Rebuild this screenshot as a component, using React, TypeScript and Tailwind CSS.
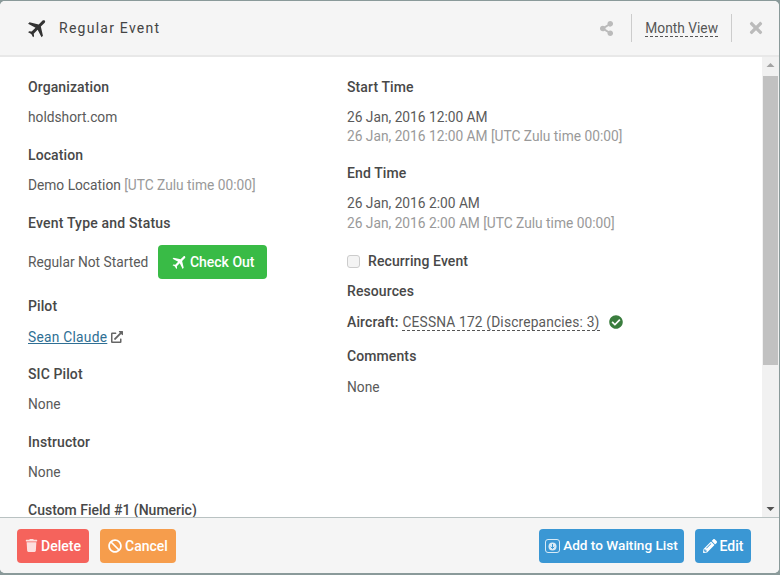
import React from 'react';
import { MdFlight } from 'react-icons/md';
import { FaShareAlt, FaTimes, FaTrash, FaBan, FaPencilAlt, FaExternalLinkAlt, FaCheckCircle } from 'react-icons/fa';

const Field: React.FC<{ label: string; className?: string; valueClass?: string; labelClass?: string; children?: React.ReactNode }> = ({ label, className, valueClass, labelClass, children }) => (
  <div className={className}>
    <div className={`font-medium text-[#484848] leading-5 ${labelClass || 'tracking-[0.1px]'}`}>{label}</div>
    {children && <div className={`leading-5 text-[#5a5a5a] text-[13.75px] ${valueClass || 'mt-[10px]'}`}>{children}</div>}
  </div>
);

const Muted: React.FC<{ children: React.ReactNode }> = ({ children }) => <span className="text-[#999]">{children}</span>;

const App: React.FC = () => {
  return (
    <div className="w-[780px] h-[575px] bg-[#8a9a9a] overflow-hidden font-['Roboto',sans-serif] text-sm pt-px pb-[2px]">
      <div className="h-[572px] w-[779px] bg-white rounded-[5px] flex flex-col overflow-hidden">
        {/* header */}
        <div className="h-[56px] shrink-0 bg-[#f5f5f5] border-b-2 border-[#e8e8e8] flex items-center pl-[26px] pr-[14px]">
          <MdFlight className="text-[#333] rotate-45" size={24} />
          <span className="ml-[9px] text-[#444] tracking-[1.25px]">Regular Event</span>
          <div className="ml-auto flex items-center">
            <FaShareAlt className="text-[#bbb]" size={15} />
            <div className="w-px h-[28px] bg-[#ccc] ml-[17px]" />
            <span className="mx-[13px] text-[#555] text-[13.75px] border-b border-dashed border-[#555] leading-[16px]">Month View</span>
            <div className="w-px h-[28px] bg-[#ccc]" />
            <FaTimes className="text-[#bbb] ml-[15px]" size={18} />
          </div>
        </div>

        {/* body */}
        <div className="flex-1 min-h-0 flex">
          <div className="flex-1 min-w-0 overflow-hidden flex pt-[20px]">
            <div className="w-[347px] pl-[28px] shrink-0">
              <Field label="Organization">holdshort.com</Field>
              <Field label="Location" className="mt-[18px]">Demo Location <Muted>[UTC Zulu time 00:00]</Muted></Field>
              <Field label="Event Type and Status" className="mt-[18px]" labelClass="tracking-[0.2px]" valueClass="mt-[12px]">
                <div className="flex items-center">
                  <span className="pb-px">Regular Not Started</span>
                  <button className="ml-[10px] h-[34px] w-[109px] rounded-[4px] bg-[#39bb46] text-white font-medium text-sm flex items-center justify-center gap-[1px]">
                    <MdFlight className="rotate-45" size={18} /> Check Out
                  </button>
                </div>
              </Field>
              <Field label="Pilot" className="mt-[17px]" valueClass="mt-[11px]">
                <span className="inline-flex items-center">
                  <span className="text-[#2f6f94] underline tracking-[0.27px]">Sean Claude</span>
                  <FaExternalLinkAlt className="ml-[4px] text-[#666]" size={12} />
                </span>
              </Field>
              <Field label="SIC Pilot" className="mt-[17px]">None</Field>
              <Field label="Instructor" className="mt-[18px]">None</Field>
              <Field label="Custom Field #1 (Numeric)" className="mt-[18px]" labelClass="tracking-normal" />
            </div>
            <div className="flex-1 min-w-0">
              <Field label="Start Time">
                26 Jan, 2016 12:00 AM
                <div className="-mt-px"><Muted>26 Jan, 2016 12:00 AM [UTC Zulu time 00:00]</Muted></div>
              </Field>
              <Field label="End Time" className="mt-[17px]">
                26 Jan, 2016 2:00 AM
                <div><Muted>26 Jan, 2016 2:00 AM [UTC Zulu time 00:00]</Muted></div>
              </Field>
              <label className="mt-[18px] flex items-center leading-5">
                <span className="w-[13px] h-[13px] border border-[#ccc] rounded-[3px] bg-[#f4f4f4]" />
                <span className="ml-[8px] font-medium text-[#484848] tracking-[0.1px]">Recurring Event</span>
              </label>
              <Field label="Resources" className="mt-[10px]" valueClass="mt-[11px]">
                <div className="flex items-center">
                  <span className="font-medium text-[#484848] text-sm tracking-[0.1px]">Aircraft:</span>
                  <span className="ml-[4px] border-b border-dashed border-[#555] leading-[16px] tracking-[0.17px]">CESSNA 172 (Discrepancies: 3)</span>
                  <FaCheckCircle className="ml-[9px] text-[#3a7d3e]" size={14} />
                </div>
              </Field>
              <Field label="Comments" className="mt-[14px]" valueClass="mt-[11px]">None</Field>
            </div>
          </div>

          {/* scrollbar */}
          <div className="w-[17px] shrink-0 bg-[#f1f1f1] flex flex-col items-center">
            <svg width="17" height="17" viewBox="0 0 17 17"><path d="M4.5 10 8.5 6l4 4z" fill="#a3a3a3" /></svg>
            <div className="w-[15px] h-[289px] bg-[#c1c1c1] mt-[2px]" />
            <div className="flex-1" />
            <svg width="17" height="17" viewBox="0 0 17 17"><path d="M4.5 7 8.5 11l4-4z" fill="#505050" /></svg>
          </div>
        </div>

        {/* footer */}
        <div className="h-[56px] shrink-0 bg-[#f5f5f5] border-t border-[#b9c2c2] flex items-center pl-[17px] pr-[28px] font-medium text-white">
          <button className="h-[34px] w-[72px] rounded-[4px] bg-[#f5635c] flex items-center justify-center gap-[3px]">
            <FaTrash size={13} className="opacity-80" /> Delete
          </button>
          <button className="ml-[11px] h-[34px] w-[76px] rounded-[4px] bg-[#f69d4c] flex items-center justify-center gap-[3px]">
            <FaBan size={14} /> Cancel
          </button>
          <button className="ml-auto h-[34px] w-[145px] rounded-[4px] bg-[#3a97d4] flex items-center justify-center gap-[3px] text-[13.6px]">
            <svg width="15" height="15" viewBox="0 0 15 15" className="opacity-80">
              <rect x="0.5" y="1.5" width="14" height="13" rx="2.5" fill="none" stroke="#fff" />
              <circle cx="7.5" cy="8.5" r="4" fill="#fff" />
              <path d="M7.5 6v4.5M5.7 8.7l1.8 1.8 1.8-1.8" stroke="#3a97d4" fill="none" />
            </svg>
            <span className="pt-px">Add to Waiting List</span>
          </button>
          <button className="ml-[11px] h-[34px] w-[56px] rounded-[4px] bg-[#3a97d4] flex items-center justify-center gap-[3px]">
            <FaPencilAlt size={14} /> Edit
          </button>
        </div>
      </div>
    </div>
  );
};

export default App;
